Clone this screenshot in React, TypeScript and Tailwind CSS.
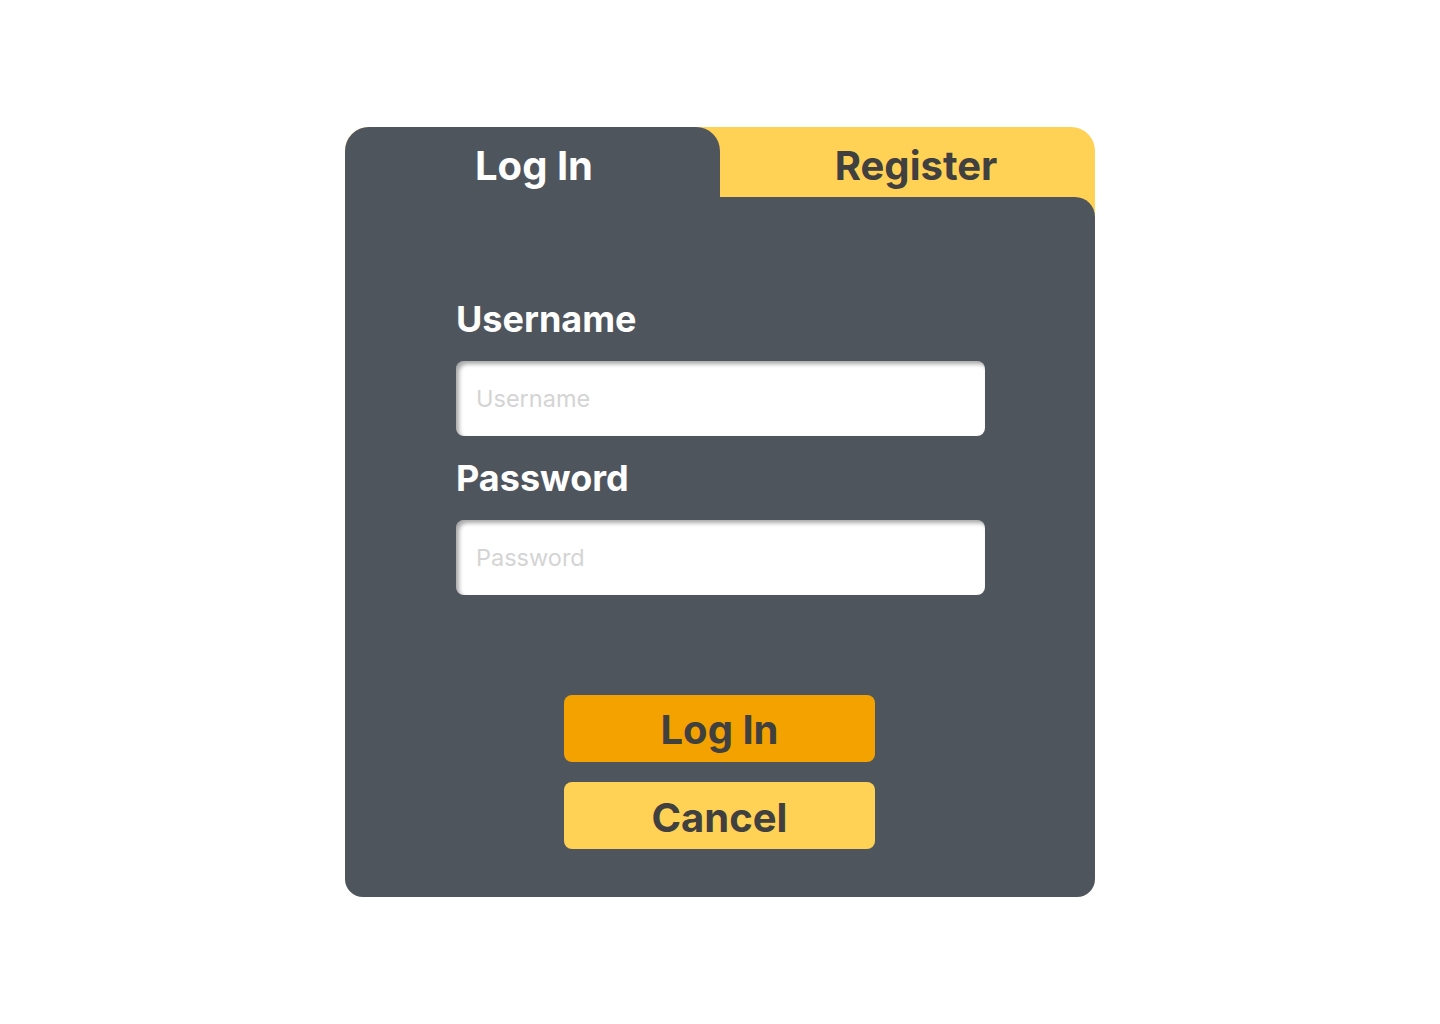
import React from "react";

export default function App() {
  return (
    <div className="w-[1440px] h-[1024px] bg-white relative" style={{ fontFamily: "Inter, 'Noto Sans', sans-serif" }}>
      <div className="absolute left-[345px] top-[127px] w-[750px] rounded-t-[24px] rounded-b-[18px] bg-[linear-gradient(#FFD154_0,#FFD154_120px,transparent_120px)]">
        <div className="flex h-[70px]">
          <div className="w-[375px] h-[70px] bg-[#4F555D] rounded-t-[24px] flex items-center justify-center pt-[8px] pl-[3px]">
            <span className="text-[40px] font-bold text-white leading-none">Log In</span>
          </div>
          <div className="flex-1 h-[70px] flex items-center justify-center pt-[8px] pl-[17px]">
            <span className="text-[40px] font-bold text-[#404040] leading-none">Register</span>
          </div>
        </div>
        <div className="bg-[#4F555D] rounded-tr-[20px] rounded-b-[18px] pl-[111px] pr-[110px] pt-[100px] pb-[48px] flex flex-col">
          <label className="text-[36px] font-bold text-white leading-[44px]">Username</label>
          <input
            placeholder="Username"
            className="mt-[20px] h-[75px] w-[529px] rounded-[8px] bg-white px-[20px] text-[23.5px] text-[#404040] placeholder:text-[#D4D4D4] outline-none shadow-[inset_3px_3px_4px_rgba(0,0,0,0.35)]"
          />
          <label className="mt-[20px] text-[36px] font-bold text-white leading-[44px]">Password</label>
          <input
            type="password"
            placeholder="Password"
            className="mt-[20px] h-[75px] w-[529px] rounded-[8px] bg-white px-[20px] text-[23.5px] text-[#404040] placeholder:text-[#D4D4D4] outline-none shadow-[inset_3px_3px_4px_rgba(0,0,0,0.35)]"
          />
          <div className="mt-[100px] flex flex-col items-start gap-[20px] pl-[108px]">
            <button className="w-[311px] h-[67px] rounded-[8px] bg-[#F4A200] text-[40px] font-bold text-[#404040] leading-none pt-[2px]">Log In</button>
            <button className="w-[311px] h-[67px] rounded-[8px] bg-[#FFD154] text-[40px] font-bold text-[#404040] leading-none pt-[4px]">Cancel</button>
          </div>
        </div>
      </div>
    </div>
  );
}
